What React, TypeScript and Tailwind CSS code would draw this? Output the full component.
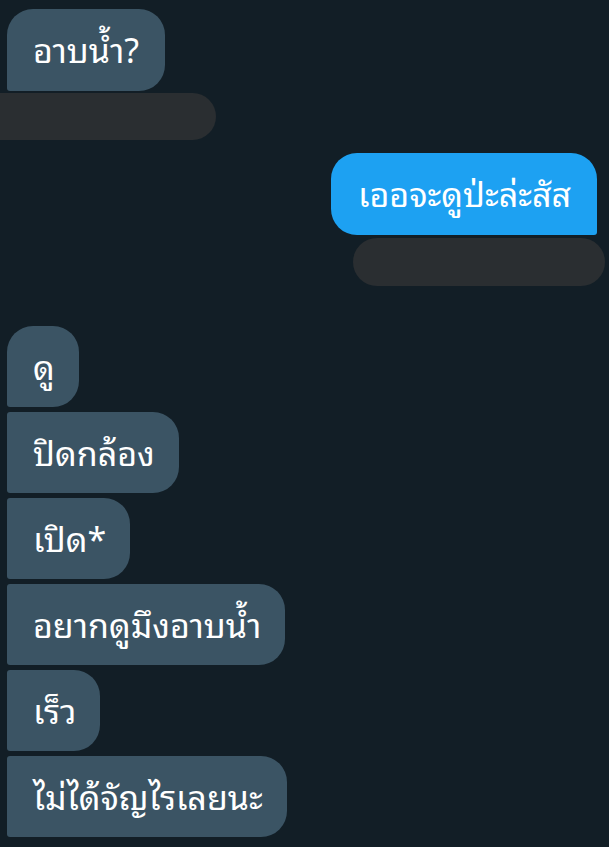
import React from "react";

const font = {
  fontFamily:
    '"Noto Sans Thai Looped", "Loma", "Garuda", "Tlwg Typist", "Noto Sans Thai", "Noto Sans", sans-serif',
};

function Left({ text, cls }: { text: string; cls: string }) {
  return (
    <div className="flex pl-[7px]">
      <div
        className={`h-[81px] flex items-center pl-[26px] pr-[24px] pb-[4px] bg-[#3b5464] text-white text-[34px] leading-none ${cls}`}
      >
        {text}
      </div>
    </div>
  );
}

export default function App() {
  return (
    <div
      className="w-[609px] h-[847px] overflow-hidden bg-[#121e26] flex flex-col"
      style={font}
    >
      <div className="pt-[9px] flex pl-[7px]">
        <div className="h-[82px] flex items-center px-[26px] pb-[4px] bg-[#3b5464] text-white text-[34px] leading-none rounded-tl-[26px] rounded-tr-[26px] rounded-br-[26px] rounded-bl-[3px]">
          อาบน้ำ?
        </div>
      </div>
      <div className="mt-[2px] h-[47px] w-[216px] bg-[#2a2e31] rounded-r-full" />
      <div className="mt-[13px] flex justify-end pr-[12px]">
        <div className="h-[82px] flex items-center pl-[27px] pr-[26px] pb-[4px] bg-[#1da1f2] text-white text-[34px] leading-none rounded-tl-[26px] rounded-tr-[26px] rounded-bl-[26px] rounded-br-[3px]">
          เออจะดูป่ะล่ะสัส
        </div>
      </div>
      <div className="mt-[3px] flex justify-end pr-[4px]">
        <div className="h-[48px] w-[252px] bg-[#2a2e31] rounded-full" />
      </div>
      <div className="mt-[40px] flex flex-col gap-[5px]">
        <Left text="ดู" cls="rounded-tl-[26px] rounded-r-[26px] rounded-bl-[3px]" />
        <Left text="ปิดกล้อง" cls="rounded-l-[3px] rounded-r-[26px]" />
        <Left text="เปิด*" cls="rounded-l-[3px] rounded-r-[26px]" />
        <Left text="อยากดูมึงอาบน้ำ" cls="rounded-l-[3px] rounded-r-[26px]" />
        <Left text="เร็ว" cls="rounded-l-[3px] rounded-r-[26px]" />
        <Left text="ไม่ได้จัญไรเลยนะ" cls="rounded-l-[3px] rounded-r-[26px]" />
      </div>
    </div>
  );
}
